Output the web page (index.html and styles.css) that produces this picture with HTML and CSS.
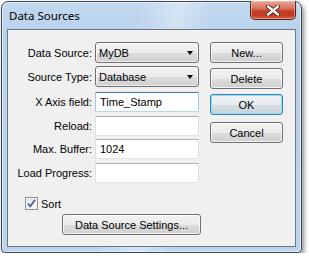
FILE: index.html
```html
<!DOCTYPE html>
<html>
<head>
<meta charset="utf-8">
<link rel="stylesheet" href="styles.css">
</head>
<body>
<div class="window">
  <div class="titlebar">
    <span class="title">Data Sources</span>
    <div class="close">
      <svg width="14" height="11" viewBox="0 0 14 11">
        <path d="M2 1.5 L12 9.5 M12 1.5 L2 9.5" stroke="#5a2418" stroke-width="4.2" stroke-linecap="round"/>
        <path d="M2 1.5 L12 9.5 M12 1.5 L2 9.5" stroke="#ffffff" stroke-width="2.4" stroke-linecap="round"/>
      </svg>
    </div>
  </div>
  <div class="client">
    <div class="form">
      <div class="row"><span class="lbl">Data Source:</span><div class="combo"><span>MyDB</span><i class="arrow"></i></div></div>
      <div class="row"><span class="lbl">Source Type:</span><div class="combo"><span>Database</span><i class="arrow"></i></div></div>
      <div class="row trow first"><span class="lbl">X Axis field:</span><div class="field focus">Time_Stamp</div></div>
      <div class="row trow"><span class="lbl">Reload:</span><div class="field"></div></div>
      <div class="row trow"><span class="lbl">Max. Buffer:</span><div class="field">1024</div></div>
      <div class="row trow"><span class="lbl">Load Progress:</span><div class="field"></div></div>
      <div class="sort">
        <span class="check">
          <svg width="11" height="11" viewBox="0 0 11 11"><path d="M2 5.5 L4.3 8.3 L9 1.8" fill="none" stroke="#4a62a8" stroke-width="1.8"/></svg>
        </span>
        <span>Sort</span>
      </div>
      <div class="btn settings">Data Source Settings...</div>
    </div>
    <div class="buttons">
      <div class="btn">New...</div>
      <div class="btn">Delete</div>
      <div class="btn default">OK</div>
      <div class="btn cancel">Cancel</div>
    </div>
  </div>
</div>
</body>
</html>
```

FILE: styles.css
```css
html, body {
  margin: 0;
  padding: 0;
  background: #ffffff;
}
body {
  font-family: "Liberation Sans", Arial, sans-serif;
  font-size: 11px;
  color: #000;
}
.window {
  box-sizing: border-box;
  margin: 1px 0 0 1px;
  width: 301px;
  height: 252px;
  border: 1px solid #3f4852;
  border-radius: 7px 7px 4px 4px;
  padding: 0 5px 5px 5px;
  background:
    linear-gradient(100deg, rgba(255,255,255,0) 40%, rgba(255,255,255,0.35) 52%, rgba(255,255,255,0) 62%),
    linear-gradient(180deg, #c2d8ef 0px, #b9d2ec 28px, #bcd5ef 100%);
  box-shadow: inset 0 0 0 1px rgba(255,255,255,0.55), 2px 3px 5px rgba(0,0,0,0.45);
  display: flex;
  flex-direction: column;
}
.titlebar {
  height: 27px;
  display: flex;
  justify-content: space-between;
  align-items: flex-start;
}
.title {
  font-family: "Noto Sans", "Liberation Sans", sans-serif;
  font-size: 11.5px;
  margin: 6px 0 0 2px;
  color: #000;
}
.close {
  box-sizing: border-box;
  width: 46px;
  height: 19px;
  margin: -1px 0 0 0;
  border: 1px solid #5c2219;
  border-top: none;
  border-radius: 0 0 5px 5px;
  background: linear-gradient(180deg, #e8a594 0%, #d7735f 40%, #c4412a 55%, #c23a22 80%, #d5634a 100%);
  box-shadow: inset 0 0 0 1px rgba(255,220,210,0.45);
  display: flex;
  align-items: center;
  justify-content: center;
}
.client {
  flex: 1;
  border: 1px solid #6b7787;
  background: #f0f0f0;
  display: flex;
  padding-top: 12px;
}
.form {
  display: flex;
  flex-direction: column;
  width: 191px;
}
.row {
  display: grid;
  grid-template-columns: 84px 104px;
  column-gap: 3px;
  align-items: center;
  height: 21px;
  margin-bottom: 3px;
}
.trow {
  height: 20px;
  margin-bottom: 3.5px;
}
.trow.first {
  margin-top: 2px;
}
.lbl {
  text-align: right;
  white-space: nowrap;
}
.combo {
  box-sizing: border-box;
  height: 21px;
  border: 1px solid #707070;
  border-radius: 3px;
  background: linear-gradient(180deg, #f2f2f2 0%, #ebebeb 50%, #dddddd 51%, #cfcfcf 100%);
  box-shadow: inset 0 0 0 1px rgba(255,255,255,0.7);
  display: flex;
  align-items: center;
  justify-content: space-between;
  padding: 1px 5px 0 3px;
}
.arrow {
  width: 0;
  height: 0;
  border-left: 3.5px solid transparent;
  border-right: 3.5px solid transparent;
  border-top: 4px solid #000;
}
.field {
  box-sizing: border-box;
  height: 20px;
  border: 1px solid #e2e3ea;
  border-top-color: #abadb3;
  border-left-color: #dbdfe6;
  border-right-color: #dbdfe6;
  background: #fff;
  padding: 3px 0 0 4px;
}
.field.focus {
  border-color: #c5daed;
  border-top-color: #3d7bad;
  border-left-color: #a4c9e3;
  border-right-color: #a4c9e3;
  border-bottom-color: #b7d9ed;
}
.sort {
  display: flex;
  align-items: center;
  gap: 3px;
  margin: 11px 0 0 17px;
  height: 13px;
}
.check {
  box-sizing: border-box;
  width: 13px;
  height: 13px;
  border: 1px solid #8e8f8f;
  background: linear-gradient(135deg, #dedede 0%, #f2f2f2 60%, #ffffff 100%);
  box-shadow: inset 0 0 0 1px #f4f4f4;
  display: flex;
  align-items: center;
  justify-content: center;
}
.btn {
  box-sizing: border-box;
  height: 21px;
  border: 1px solid #707070;
  border-radius: 3px;
  background: linear-gradient(180deg, #f2f2f2 0%, #ebebeb 50%, #dddddd 51%, #cfcfcf 100%);
  box-shadow: inset 0 0 0 1px rgba(255,255,255,0.75);
  display: flex;
  align-items: center;
  justify-content: center;
  padding-top: 1px;
  white-space: nowrap;
}
.settings {
  width: 139px;
  margin: 4px 0 0 54px;
}
.buttons {
  display: flex;
  flex-direction: column;
  gap: 5px;
  margin-left: 11px;
  width: 73px;
}
.btn.default {
  border-color: #3c7fb1;
  box-shadow: inset 0 0 0 1px #8fdcf7;
  background: linear-gradient(180deg, #eef3f6 0%, #e6ecef 50%, #d6dfe4 51%, #c9d3d9 100%);
}
.btn.cancel {
  margin-top: 2px;
}
```
